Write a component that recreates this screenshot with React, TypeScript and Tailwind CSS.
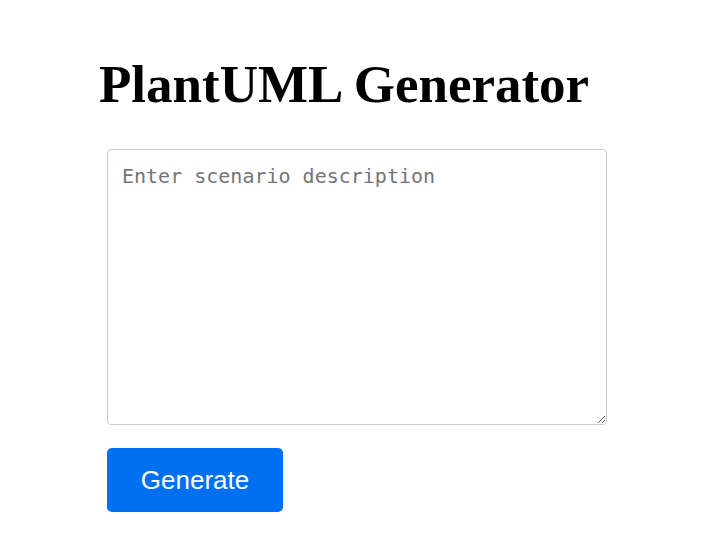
export default function App() {
  return (
    <div className="min-h-[550px] w-[724px] bg-white">
      <div className="flex flex-col pl-[107px] pt-[50px]">
        <h1 className="ml-[-8px] font-['Liberation_Serif',serif] text-[53px] font-bold leading-[68px] text-black">
          PlantUML Generator
        </h1>
        <textarea
          className="mt-[31px] h-[276px] w-[500px] rounded-[4px] border border-[#cccccc] px-[14px] py-[12px] font-['DejaVu_Sans_Mono',monospace] text-[20px] leading-[28px] text-black outline-none placeholder:text-[#757575]"
          placeholder="Enter scenario description"
        />
        <button className="mt-[23px] h-[64px] w-[176px] rounded-[5px] bg-[#0070f3] font-['Liberation_Sans',Arial,sans-serif] text-[26px] text-white">
          Generate
        </button>
      </div>
    </div>
  );
}
